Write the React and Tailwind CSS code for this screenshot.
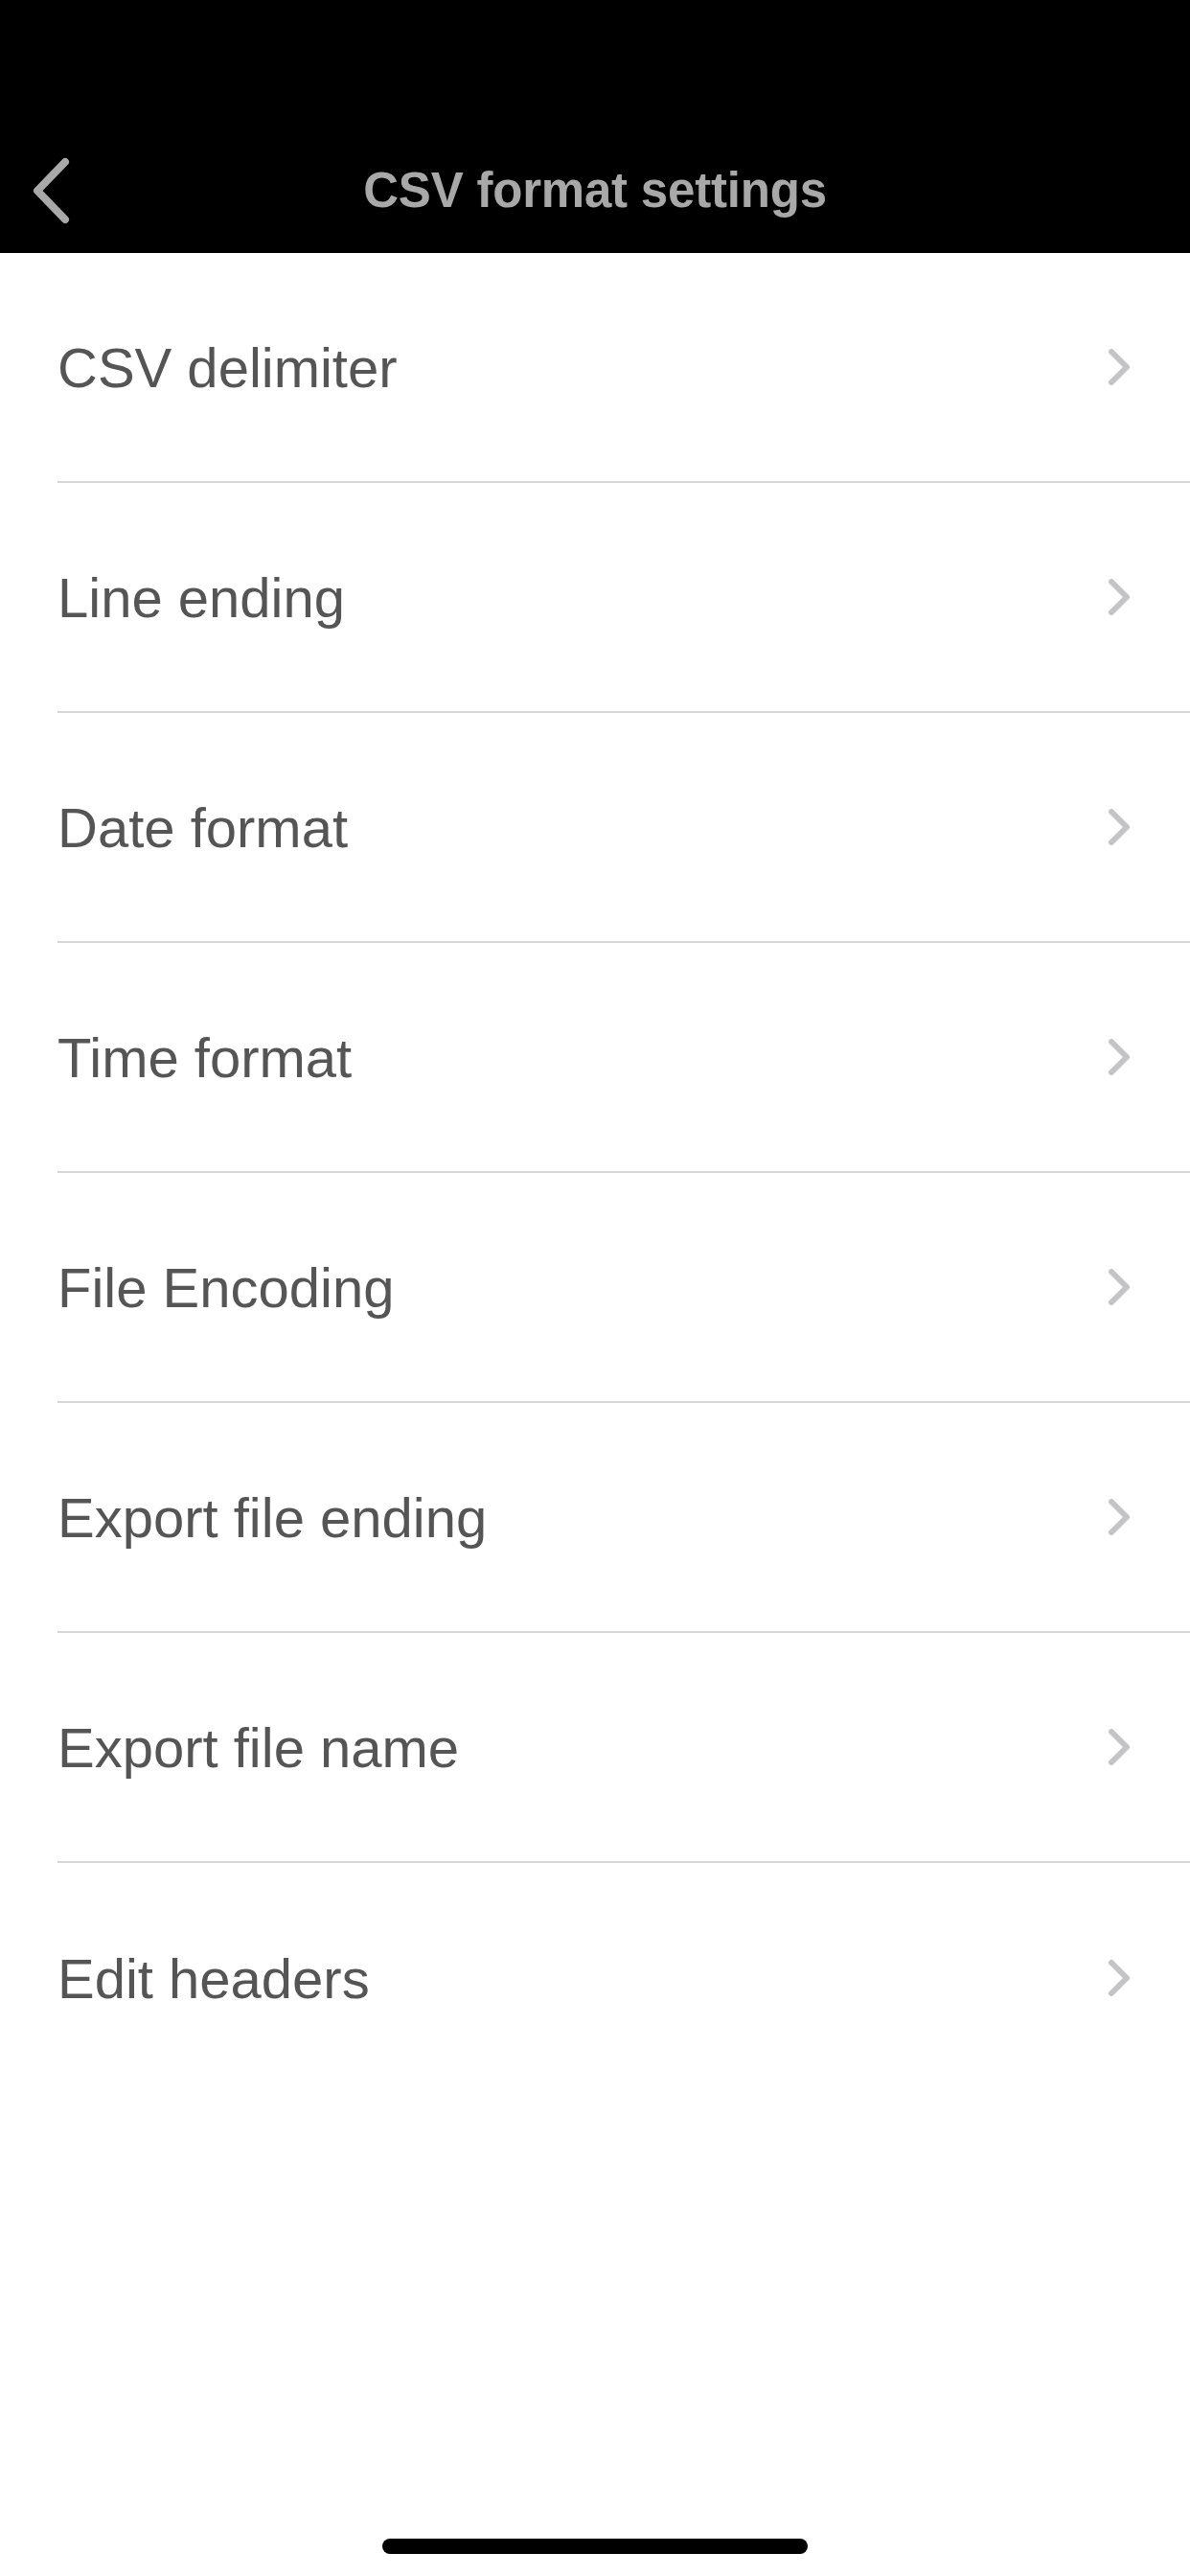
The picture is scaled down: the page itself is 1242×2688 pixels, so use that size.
import React from "react";

const items = [
  "CSV delimiter",
  "Line ending",
  "Date format",
  "Time format",
  "File Encoding",
  "Export file ending",
  "Export file name",
  "Edit headers",
];

function ChevronRight() {
  return (
    <svg width="28" height="42" viewBox="0 0 28 42" fill="none">
      <path d="M6 5 L22 21 L6 37" stroke="#c4c4c6" strokeWidth="6" strokeLinecap="round" strokeLinejoin="round" />
    </svg>
  );
}

function ChevronLeft() {
  return (
    <svg width="48" height="70" viewBox="0 0 48 70" fill="none">
      <path d="M38 5 L9 35 L38 65" stroke="#a9a9a9" strokeWidth="8" strokeLinecap="round" strokeLinejoin="round" />
    </svg>
  );
}

export default function App() {
  return (
    <div className="w-[1242px] h-[2688px] bg-white flex flex-col relative" style={{ fontFamily: '"Liberation Sans", Arial, sans-serif' }}>
      <header className="bg-black h-[264px] pt-[134px] shrink-0">
        <div className="h-[130px] relative flex items-center justify-center">
          <div className="absolute left-[30px] top-[30px]">
            <ChevronLeft />
          </div>
          <h1 className="text-[51px] font-bold text-[#a8a8a8] tracking-[-0.2px]">CSV format settings</h1>
        </div>
      </header>
      <ul className="flex flex-col">
        {items.map((label, i) => (
          <li key={label} className="pl-[60px]">
            <div className={`h-[240px] flex items-center justify-between pr-[60px] ${i < items.length - 1 ? "border-b-2 border-[#d6d6d6]" : ""}`}>
              <span className="text-[58px] text-[#555555]">{label}</span>
              <ChevronRight />
            </div>
          </li>
        ))}
      </ul>
      <div className="absolute left-[399px] top-[2649px] w-[444px] h-[16px] rounded-full bg-black" />
    </div>
  );
}
